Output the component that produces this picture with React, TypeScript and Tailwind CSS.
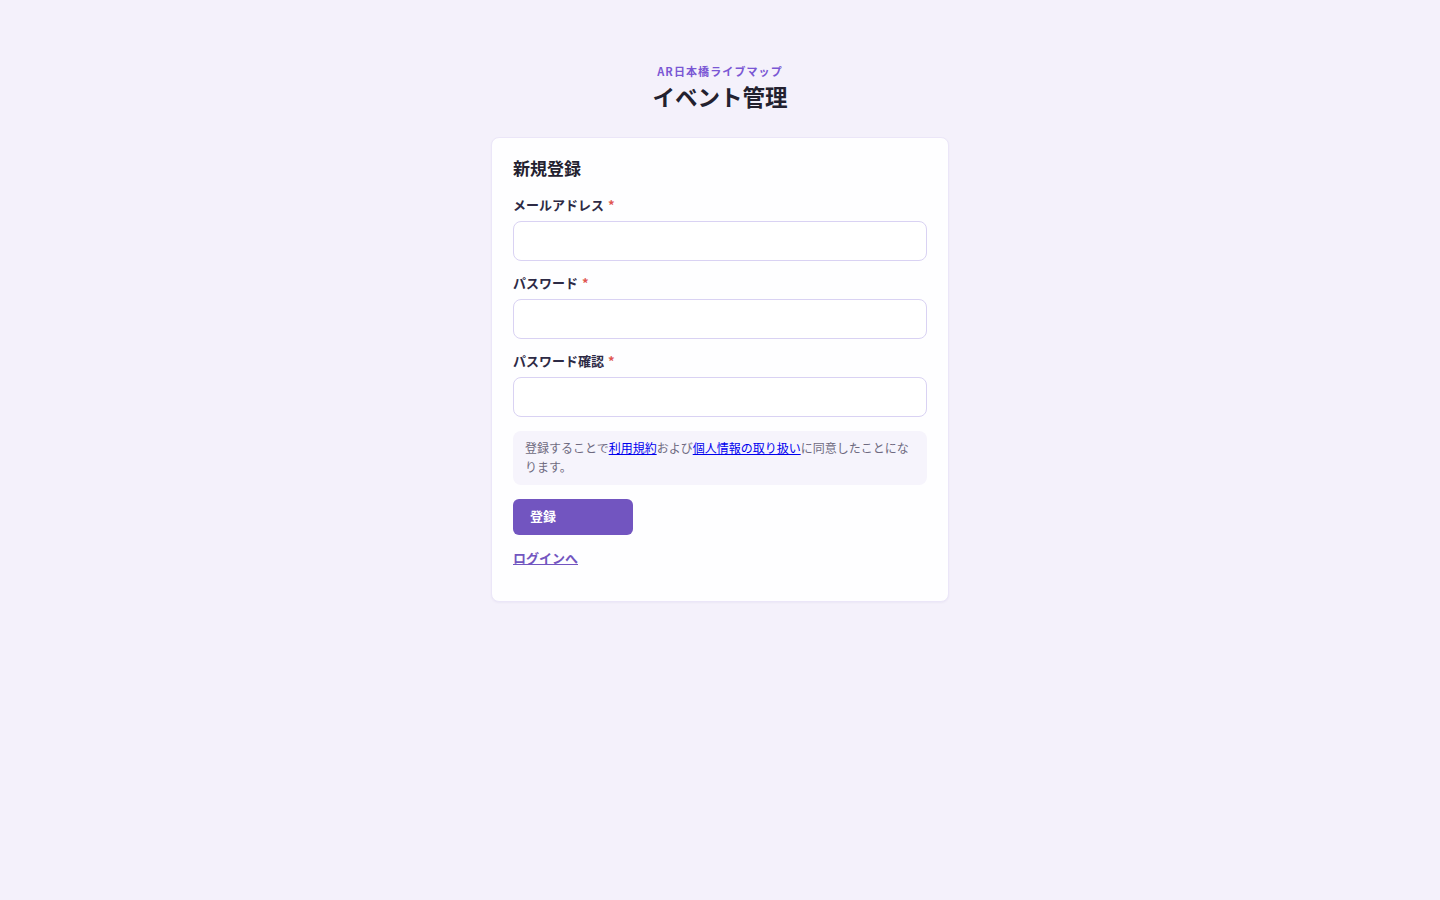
import React, { useState } from 'react';

const font = { fontFamily: '"Noto Sans CJK JP", "Noto Sans", sans-serif' };

const Field: React.FC<{ label: string; type: string; value: string; onChange: (v: string) => void }> = ({ label, type, value, onChange }) => (
  <div className="mb-[13px]">
    <label className="flex items-center gap-1 text-[13px] leading-[18px] font-bold text-[#2d2a45] mb-[7px]">
      {label}
      <span className="text-[#e0564f]">*</span>
    </label>
    <input
      type={type}
      value={value}
      onChange={(e) => onChange(e.target.value)}
      className="block w-full h-10 px-3 bg-white border border-[#d9d2f3] rounded-lg text-sm outline-none focus:border-[#7255c0]"
    />
  </div>
);

const App: React.FC = () => {
  const [email, setEmail] = useState('');
  const [password, setPassword] = useState('');
  const [confirm, setConfirm] = useState('');

  return (
    <div className="min-h-screen bg-[#f4f1fb] pt-[63px]" style={font}>
      <div className="text-center">
        <p className="text-[11px] leading-4 font-bold text-[#7a57d4] tracking-[0.1em]">AR日本橋ライブマップ</p>
        <h1 className="text-[22.5px] leading-8 font-bold text-[#23212f] mt-[1px]">イベント管理</h1>
      </div>

      <div className="w-[458px] mx-auto mt-[25px] bg-[#fefeff] border border-[#ebe6f8] rounded-lg px-[21px] pt-[20px] pb-[33px] shadow-[0_1px_2px_rgba(80,60,140,0.05)]">
        <h2 className="text-[17px] leading-[20px] font-bold text-[#23212f] mb-[18px]">新規登録</h2>

        <form onSubmit={(e) => e.preventDefault()}>
          <Field label="メールアドレス" type="email" value={email} onChange={setEmail} />
          <Field label="パスワード" type="password" value={password} onChange={setPassword} />
          <Field label="パスワード確認" type="password" value={confirm} onChange={setConfirm} />

          <div className="mt-[14px] bg-[#f6f4fc] rounded-lg px-3 pt-[7px] pb-[9px] text-[12px] leading-[19px] text-[#6e6a80]">
            登録することで<a href="#" className="text-[#0000ee] underline">利用規約</a>および<a href="#" className="text-[#0000ee] underline">個人情報の取り扱い</a>に同意したことになります。
          </div>

          <button
            type="submit"
            className="mt-[14px] w-[120px] h-9 bg-[#7255c0] hover:bg-[#6548b3] text-white text-[13px] font-bold rounded-md text-left pl-[17px] pb-[2px]"
          >
            登録
          </button>
        </form>

        <div className="mt-[9px]">
          <a href="#" className="text-[13px] leading-[18px] font-semibold text-[#7255c0] underline">ログインへ</a>
        </div>
      </div>
    </div>
  );
};

export default App;
